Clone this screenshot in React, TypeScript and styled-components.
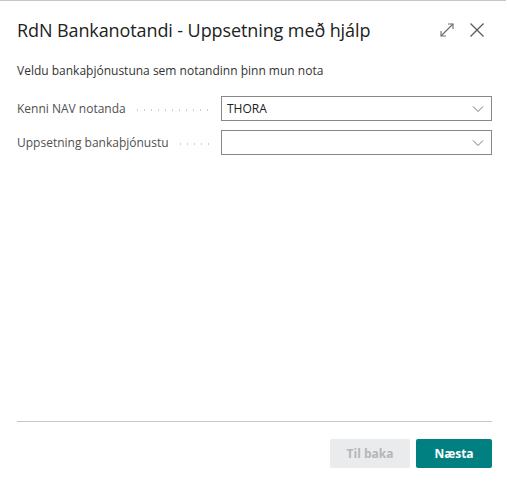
import styled, { createGlobalStyle } from "styled-components";

const GlobalStyle = createGlobalStyle`
    html, body {
        margin: 0;
        padding: 0;
        background: #ffffff;
    }
    body {
        font-family: "Segoe UI", "Open Sans", "Noto Sans", sans-serif;
    }
`;

const fields = [
    { label: 'Kenni NAV notanda', value: 'THORA' },
    { label: 'Uppsetning bankaþjónustu', value: '' },
];

const ExpandIcon = () => (
    <svg width="16" height="16" viewBox="0 0 16 16" fill="none" stroke="#6b6b6b" strokeWidth="1.1">
        <path d="M2 14 L14 2" />
        <path d="M9 2 H14 V7" />
        <path d="M2 9 V14 H7" />
    </svg>
);

const CloseIcon = () => (
    <svg width="16" height="16" viewBox="0 0 16 16" fill="none" stroke="#5a5a5a" strokeWidth="1.3">
        <path d="M1.5 1.5 L14.5 14.5" />
        <path d="M14.5 1.5 L1.5 14.5" />
    </svg>
);

const Chevron = () => (
    <svg width="12" height="8" viewBox="0 0 12 8" fill="none" stroke="#7a7774" strokeWidth="1">
        <path d="M1 1.5 L6 6.5 L11 1.5" />
    </svg>
);

const App = () => {
    return (
        <>
        <GlobalStyle />
        <Dialog>
            <Header>
                <Title>RdN Bankanotandi - Uppsetning með hjálp</Title>
                <HeaderActions>
                    <IconButton><ExpandIcon /></IconButton>
                    <IconButton><CloseIcon /></IconButton>
                </HeaderActions>
            </Header>
            <Body>
                <Instruction>Veldu bankaþjónustuna sem notandinn þinn mun nota</Instruction>
                <FieldList>
                    {fields.map((field) => (
                        <FieldRow key={field.label}>
                            <LabelCell>
                                <Label>{field.label}</Label>
                                <Leader />
                            </LabelCell>
                            <SelectBox>
                                <SelectValue>{field.value}</SelectValue>
                                <Chevron />
                            </SelectBox>
                        </FieldRow>
                    ))}
                </FieldList>
            </Body>
            <Footer>
                <Button disabled>Til baka</Button>
                <Button primary>Næsta</Button>
            </Footer>
        </Dialog>
        </>
    )
};

const Dialog = styled.div`
    width: 506px;
    height: 488px;
    box-sizing: border-box;
    border-top: 1px solid #c8c6c4;
    display: flex;
    flex-direction: column;
    background-color: #ffffff;
`;

const Header = styled.div`
    display: flex;
    align-items: center;
    justify-content: space-between;
    padding: 16px 21px 0 17px;
    height: 26px;
`;

const Title = styled.div`
    font-size: 18px;
    font-weight: 400;
    color: #222222;
    letter-spacing: -0.1px;
`;

const HeaderActions = styled.div`
    display: flex;
    gap: 14px;
    align-items: center;
`;

const IconButton = styled.div`
    width: 16px;
    height: 16px;
    display: flex;
    align-items: center;
    justify-content: center;
`;

const Body = styled.div`
    flex: 1;
    padding: 0 14px 0 17px;
`;

const Instruction = styled.div`
    margin-top: 20px;
    font-size: 12px;
    color: #333333;
    line-height: 16px;
`;

const FieldList = styled.div`
    margin-top: 17px;
    display: flex;
    flex-direction: column;
    gap: 9px;
`;

const FieldRow = styled.div`
    display: grid;
    grid-template-columns: 204px 271px;
    align-items: center;
`;

const LabelCell = styled.div`
    display: flex;
    align-items: center;
    gap: 8px;
    padding-right: 8px;
`;

const Label = styled.span`
    font-size: 12px;
    color: #505050;
    white-space: nowrap;
`;

const Leader = styled.span`
    flex: 1;
    height: 2px;
    margin-top: 3px;
    background-image: radial-gradient(circle, #cfcdcb 0.7px, transparent 0.9px);
    background-size: 7px 2px;
    background-repeat: repeat-x;
`;

const SelectBox = styled.div`
    height: 25px;
    box-sizing: border-box;
    border: 1px solid #8a8886;
    display: flex;
    align-items: center;
    justify-content: space-between;
    padding: 0 7px 0 5px;
`;

const SelectValue = styled.span`
    font-size: 12px;
    color: #212121;
`;

const Footer = styled.div`
    margin: 0 14px 0 17px;
    border-top: 1px solid #c8c6c4;
    display: flex;
    justify-content: flex-end;
    gap: 6px;
    padding: 17px 0 20px;
`;

const Button = styled.button<{ primary?: boolean }>`
    height: 29px;
    min-width: ${({ primary }) => (primary ? '76px' : '80px')};
    border: none;
    border-radius: 2px;
    font-family: inherit;
    font-size: 12px;
    font-weight: 700;
    padding: 0 16px;
    background-color: ${({ primary }) => (primary ? '#008080' : '#eaebec')};
    color: ${({ primary }) => (primary ? '#ffffff' : '#b4b6ba')};
`;

export default App;
